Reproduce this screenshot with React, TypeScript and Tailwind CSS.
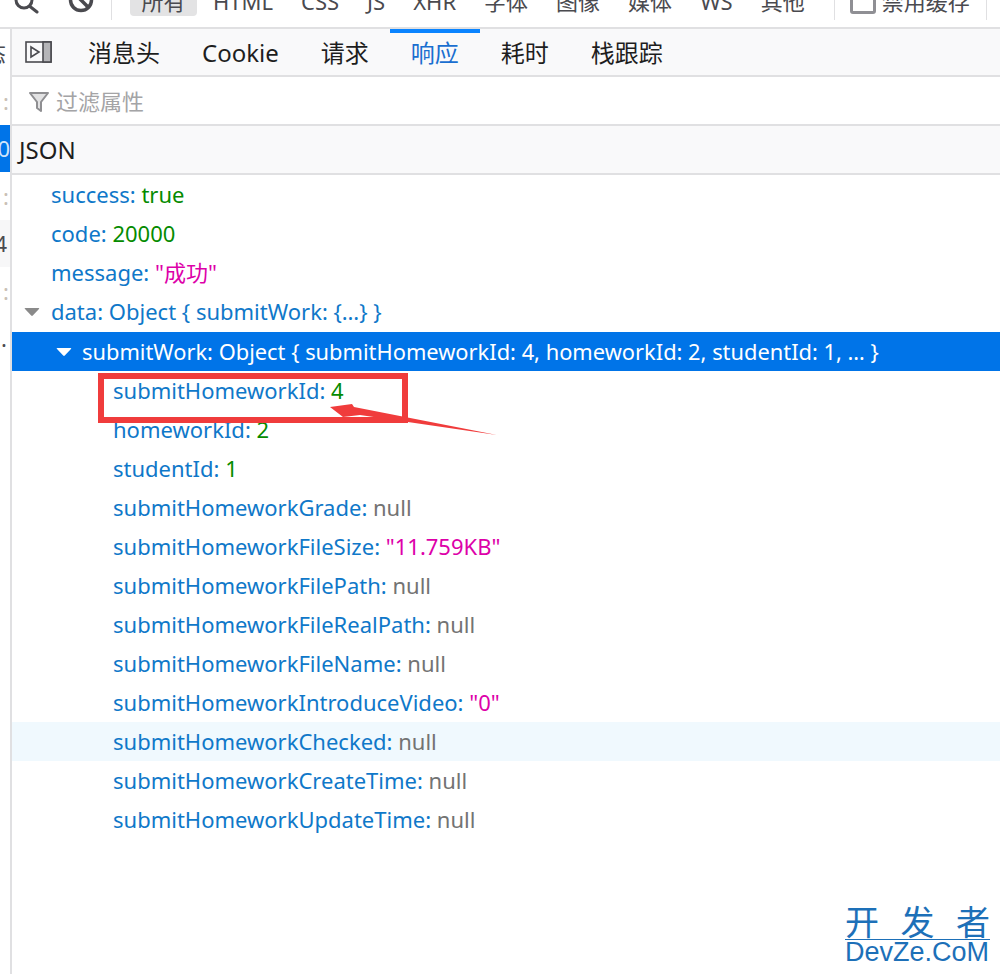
const tabs = ["消息头", "Cookie", "请求", "响应", "耗时", "栈跟踪"];
const filters = ["HTML", "CSS", "JS", "XHR", "字体", "图像", "媒体", "WS", "其他"];

type Row = {
  name: string;
  value: string;
  kind: "num" | "str" | "null";
  hover?: boolean;
};

const topRows: Row[] = [
  { name: "success", value: "true", kind: "num" },
  { name: "code", value: "20000", kind: "num" },
  { name: "message", value: '"成功"', kind: "str" },
];

const workRows: Row[] = [
  { name: "submitHomeworkId", value: "4", kind: "num" },
  { name: "homeworkId", value: "2", kind: "num" },
  { name: "studentId", value: "1", kind: "num" },
  { name: "submitHomeworkGrade", value: "null", kind: "null" },
  { name: "submitHomeworkFileSize", value: '"11.759KB"', kind: "str" },
  { name: "submitHomeworkFilePath", value: "null", kind: "null" },
  { name: "submitHomeworkFileRealPath", value: "null", kind: "null" },
  { name: "submitHomeworkFileName", value: "null", kind: "null" },
  { name: "submitHomeworkIntroduceVideo", value: '"0"', kind: "str" },
  { name: "submitHomeworkChecked", value: "null", kind: "null", hover: true },
  { name: "submitHomeworkCreateTime", value: "null", kind: "null" },
  { name: "submitHomeworkUpdateTime", value: "null", kind: "null" },
];

function valueColor(kind: Row["kind"]) {
  if (kind === "num") return "text-[#058b00]";
  if (kind === "str") return "text-[#dd00a9]";
  return "text-[#737373]";
}

function Caret({ light }: { light?: boolean }) {
  return (
    <svg width="16" height="10" viewBox="0 0 16 10" className={light ? "text-white" : "text-[#8a8a8a]"}>
      <path d="M0.5 1.5 Q0.5 1 1.5 1 H14.5 Q15.5 1 15.2 1.8 L8.8 8.6 Q8 9.3 7.2 8.6 L0.8 1.8 Z" fill="currentColor" />
    </svg>
  );
}

function SliverValue() {
  return (
    <div className="flex h-[48px] shrink-0 items-center justify-end whitespace-nowrap pr-[1px] text-[#0a6fc2]">
      0<span className="ml-[3px] text-[#c9c0b6]">:</span>
    </div>
  );
}

export default function App() {
  return (
    <div
      className="flex h-[974px] w-[1000px] flex-col overflow-hidden bg-white text-[22px] text-[#1e1e1e]"
      style={{ fontFamily: '"Noto Sans", "Noto Sans CJK SC", sans-serif' }}
    >
      {/* Top filter toolbar, the crop cuts off its upper half */}
      <div className="h-[29px] shrink-0 overflow-hidden border-b-2 border-[#e0e0e2]">
        <div className="flex h-[2px] items-center whitespace-nowrap pl-[13px] text-[#4a4a4f]">
          <svg width="26" height="28" viewBox="0 0 26 28" fill="none" stroke="#4a4a4f" strokeWidth="3" className="shrink-0">
            <circle cx="11" cy="13" r="8" />
            <path d="M17 19.5 L24 25" strokeLinecap="round" />
          </svg>
          <svg width="26" height="28" viewBox="0 0 26 28" fill="none" stroke="#4a4a4f" strokeWidth="3.5" className="ml-[29px] shrink-0">
            <circle cx="13" cy="13" r="10.5" />
            <path d="M5 5 L21 21" />
          </svg>
          <div className="ml-[17px] h-[38px] w-px shrink-0 bg-[#e0e0e2]" />
          <div className="ml-[18px] flex h-[30px] w-[67px] shrink-0 items-center justify-center rounded-[4px] bg-[#e3e3e4]">所有</div>
          <div className="ml-[16px] flex items-center gap-[28px]">
            {filters.map((f) => (
              <span key={f} className="leading-[30px]">
                {f}
              </span>
            ))}
          </div>
          <div className="ml-[29px] h-[38px] w-px shrink-0 bg-[#e0e0e2]" />
          <div className="ml-[15px] h-[26px] w-[26px] shrink-0 rounded-[3px] border-[3px] border-[#8f8f94]" />
          <span className="ml-[6px] leading-[30px]">禁用缓存</span>
          <div className="ml-[16px] h-[38px] w-px shrink-0 bg-[#e0e0e2]" />
        </div>
      </div>

      <div className="flex flex-1">
        {/* Sliver of the request list on the left */}
        <div className="flex w-[10px] shrink-0 flex-col overflow-hidden">
          <div className="flex h-[48px] shrink-0 items-center justify-end whitespace-nowrap pr-[4px] text-[#4a4a4f]">状态</div>
          <SliverValue />
          <div className="flex h-[47px] shrink-0 items-center justify-end whitespace-nowrap bg-[#0074e8] text-[#cfe4fb]">40</div>
          <SliverValue />
          <div className="flex h-[47px] shrink-0 items-center justify-end whitespace-nowrap bg-[#f7f7f8] pr-[3px] text-[#4a4a4f]">4</div>
          <SliverValue />
          <div className="flex h-[47px] shrink-0 items-center justify-end whitespace-nowrap pr-[3px] text-[#4a4a4f]">.</div>
        </div>

        <div className="flex min-w-0 flex-1 flex-col border-l-2 border-[#e0e0e2]">
          <div className="flex h-[48px] shrink-0 items-center border-b-2 border-[#e0e0e2] bg-[#f9f9fa] text-[24px]">
            <svg width="28" height="24" viewBox="0 0 28 24" fill="none" className="ml-[13px] mr-[14px] shrink-0">
              <rect x="1" y="2" width="25" height="20" stroke="#4a4a4f" strokeWidth="1.6" />
              <rect x="18" y="2" width="8" height="20" fill="#b5b5b8" stroke="#4a4a4f" strokeWidth="1.6" />
              <path d="M6 7 L14 12 L6 17 Z" stroke="#4a4a4f" strokeWidth="1.6" />
            </svg>
            {tabs.map((t) => (
              <div
                key={t}
                className={
                  t === "响应"
                    ? "flex h-full items-center border-t-[4px] border-[#0a84ff] px-[21px] pb-[2px] text-[#1a6fd0]"
                    : "flex h-full items-center px-[21px] pt-[2px]"
                }
              >
                {t}
              </div>
            ))}
          </div>

          <div className="flex h-[49px] shrink-0 items-center gap-[7px] border-b-2 border-[#e0e0e2] pl-[17px] pt-[2px] text-[#a4a4a6]">
            <svg width="20" height="22" viewBox="0 0 20 22" stroke="#8f8f92" strokeWidth="2" fill="#e2e2e3" className="shrink-0">
              <path d="M1 2 H19 L12 11 V20 L8 17 V11 Z" strokeLinejoin="round" />
            </svg>
            过滤属性
          </div>

          <div className="flex h-[49px] shrink-0 items-center border-b-2 border-[#e0e0e2] bg-[#f9f9fa] pl-[7px] text-[24px]">JSON</div>

          <div className="leading-[39px] text-[#0f78c9]">
            {topRows.map((r) => (
              <div key={r.name} className="h-[39px] pl-[39px]">
                {r.name}: <span className={valueColor(r.kind)}>{r.value}</span>
              </div>
            ))}
            <div className="flex h-[40px] items-center pb-[1px] pl-[12px]">
              <Caret />
              <span className="ml-[11px]">data: Object {"{ submitWork: {…} }"}</span>
            </div>
            <div className="flex h-[39px] items-center bg-[#0074e8] pl-[44px] text-white">
              <Caret light />
              <span className="ml-[10px] whitespace-nowrap text-[21.85px]">submitWork: Object {"{ submitHomeworkId: 4, homeworkId: 2, studentId: 1, … }"}</span>
            </div>
            <div className="relative">
              {workRows.map((r) => (
                <div key={r.name} className={r.hover ? "h-[39px] bg-[#f0f9fe] pl-[101px]" : "h-[39px] pl-[101px]"}>
                  {r.name}: <span className={valueColor(r.kind)}>{r.value}</span>
                </div>
              ))}
              {/* Red annotation drawn over the screenshot */}
              <div className="absolute left-[86px] top-[2px] h-[50px] w-[310px] border-[6px] border-[#f03c3c]" />
              <svg width="170" height="36" viewBox="0 0 170 36" className="absolute left-[318px] top-[29px]">
                <path d="M0 7 L22 4 L24 7 L167 35 L30 15 L13 17 Z" fill="#f03c3c" />
              </svg>
            </div>
          </div>

          {/* Site watermark */}
          <div className="flex flex-1 justify-end pr-[10px] pt-[66px]">
            <div className="h-fit w-[145px] text-[#1d70b8]">
              <div className="flex justify-between border-b border-[#1d70b8] text-[34px] leading-[34px]">
                <span>开</span>
                <span>发</span>
                <span>者</span>
              </div>
              <div className="whitespace-nowrap text-[27px] leading-[25px]" style={{ fontFamily: '"Liberation Sans", sans-serif' }}>
                DevZe.CoM
              </div>
            </div>
          </div>
        </div>
      </div>
    </div>
  );
}
